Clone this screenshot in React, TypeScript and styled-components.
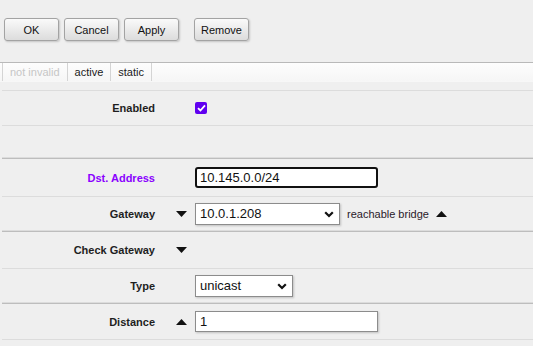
import { FC, ReactNode } from "react";
import styled, { createGlobalStyle, css } from "styled-components";

const GlobalStyle = createGlobalStyle`
  html, body {
    margin: 0;
    padding: 0;
    background: #efefef;
    font-family: "Liberation Sans", Arial, sans-serif;
    color: #222;
  }
`;

const Page = styled.div`
  width: 533px;
  height: 346px;
  overflow: hidden;
`;

const Toolbar = styled.div`
  display: flex;
  align-items: center;
  gap: 5px;
  padding: 18px 0 0 4px;
  height: 23px;
`;

const Button = styled.button<{ $spaced?: boolean }>`
  width: 55px;
  height: 23px;
  padding: 0;
  font-family: inherit;
  font-size: 11px;
  color: #111;
  background: linear-gradient(#fafafa, #dcdcdc);
  border: 1px solid #a3a3a3;
  border-radius: 3px;
  box-shadow: 1px 1px 2px rgba(0, 0, 0, 0.18);
  ${({ $spaced }) =>
    $spaced &&
    css`
      margin-left: 10px;
    `}
`;

const TabBar = styled.div`
  display: flex;
  margin-top: 21px;
  height: 18px;
  padding-left: 2px;
  border-top: 1px solid #b9b9b9;
  border-bottom: 1px solid #f7f7f7;
  background: linear-gradient(#fdfdfd, #f6f6f6);
`;

const Tab = styled.div<{ $muted?: boolean }>`
  display: flex;
  align-items: center;
  padding: 0 7px;
  font-size: 11px;
  color: ${({ $muted }) => ($muted ? "#c6c6c6" : "#1a1a1a")};
  border-left: 1px solid #d4d4d4;
  &:last-child {
    border-right: 1px solid #d4d4d4;
  }
`;

const Form = styled.div`
  margin: 8px 0 0 2px;
  border-top: 1px solid #dcdcdc;
`;

const Section = styled.div`
  border-top: 1px solid #bdbdbd;
`;

const Row = styled.div<{ $h?: number }>`
  display: grid;
  grid-template-columns: 153px 40px 1fr;
  align-items: center;
  height: ${({ $h }) => $h ?? 34}px;
  border-bottom: 1px solid #dcdcdc;
`;

const Label = styled.div<{ $accent?: boolean }>`
  text-align: right;
  font-size: 11px;
  font-weight: bold;
  color: ${({ $accent }) => ($accent ? "#8a00ff" : "#1e1e1e")};
`;

const ArrowCell = styled.div`
  display: flex;
  justify-content: flex-end;
  padding-right: 8px;
`;

const Field = styled.div`
  display: flex;
  align-items: center;
  gap: 7px;
`;

const TextInput = styled.input<{ $focused?: boolean }>`
  box-sizing: border-box;
  width: 183px;
  height: 21px;
  padding: 0 4px;
  font-family: inherit;
  font-size: 13px;
  color: #111;
  background: #fff;
  border: 1px solid #8c8c8c;
  box-shadow: 1px 1px 2px rgba(0, 0, 0, 0.2);
  outline: none;
  ${({ $focused }) =>
    $focused &&
    css`
      border: 2px solid #111;
      border-radius: 3px;
      padding: 0 3px;
      box-shadow: none;
    `}
`;

const SelectWrap = styled.div<{ $w: number }>`
  position: relative;
  width: ${({ $w }) => $w}px;
  height: 22px;
  svg {
    position: absolute;
    right: 6px;
    top: 8px;
    pointer-events: none;
  }
`;

const Select = styled.select`
  appearance: none;
  box-sizing: border-box;
  width: 100%;
  height: 100%;
  padding: 0 4px;
  font-family: inherit;
  font-size: 13px;
  color: #111;
  background: #fff;
  border: 1px solid #8c8c8c;
  border-radius: 0;
  box-shadow: 1px 1px 2px rgba(0, 0, 0, 0.2);
  outline: none;
`;

const Note = styled.span`
  font-size: 11px;
  color: #2a1a2a;
`;

const Check = styled.span`
  display: inline-flex;
  align-items: center;
  justify-content: center;
  width: 12px;
  height: 12px;
  border-radius: 2px;
  background: #6000f0;
`;

const Triangle: FC<{ up?: boolean }> = ({ up }) => (
  <svg width="11" height="6" viewBox="0 0 11 6">
    <polygon points={up ? "0,6 11,6 5.5,0" : "0,0 11,0 5.5,6"} fill="#111" />
  </svg>
);

const Chevron: FC = () => (
  <svg width="10" height="7" viewBox="0 0 10 7">
    <path d="M1.2 1.2 L5 5 L8.8 1.2" stroke="#111" strokeWidth="2.2" fill="none" />
  </svg>
);

const Dropdown: FC<{ w: number; value: string }> = ({ w, value }) => (
  <SelectWrap $w={w}>
    <Select defaultValue={value}>
      <option>{value}</option>
    </Select>
    <Chevron />
  </SelectWrap>
);

const FormRow: FC<{
  label?: string;
  accent?: boolean;
  arrow?: "up" | "down";
  h?: number;
  children?: ReactNode;
}> = ({ label, accent, arrow, h, children }) => (
  <Row $h={h}>
    <Label $accent={accent}>{label}</Label>
    <ArrowCell>{arrow && <Triangle up={arrow === "up"} />}</ArrowCell>
    <Field>{children}</Field>
  </Row>
);

export default function App() {
  return (
    <Page>
      <GlobalStyle />
      <Toolbar>
        <Button>OK</Button>
        <Button>Cancel</Button>
        <Button>Apply</Button>
        <Button $spaced>Remove</Button>
      </Toolbar>
      <TabBar>
        <Tab $muted>not invalid</Tab>
        <Tab>active</Tab>
        <Tab>static</Tab>
      </TabBar>
      <Form>
        <FormRow label="Enabled">
          <Check>
            <svg width="9" height="8" viewBox="0 0 9 8">
              <path d="M1 4.2 L3.4 6.5 L8 1.3" stroke="#fff" strokeWidth="1.8" fill="none" />
            </svg>
          </Check>
        </FormRow>
        <FormRow h={31} />
        <Section>
          <FormRow label="Dst. Address" accent h={37}>
            <TextInput $focused defaultValue="10.145.0.0/24" />
          </FormRow>
          <FormRow label="Gateway" arrow="down" h={33}>
            <Dropdown w={145} value="10.0.1.208" />
            <Note>reachable bridge</Note>
            <Triangle up />
          </FormRow>
        </Section>
        <Section>
          <FormRow label="Check Gateway" arrow="down" h={36} />
          <FormRow label="Type" h={33}>
            <Dropdown w={98} value="unicast" />
          </FormRow>
        </Section>
        <Section>
          <FormRow label="Distance" arrow="up" h={35}>
            <TextInput defaultValue="1" />
          </FormRow>
        </Section>
      </Form>
    </Page>
  );
}
